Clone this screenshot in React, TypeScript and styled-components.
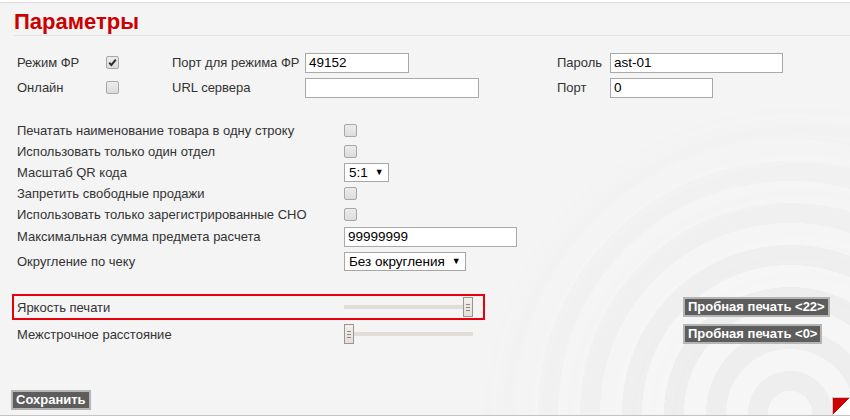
import React from 'react'
import styled, { createGlobalStyle } from 'styled-components'

const GlobalStyle = createGlobalStyle`
  html, body {
    margin: 0;
    padding: 0;
    background: #fff;
    font-family: "Liberation Sans", Arial, sans-serif;
  }
`

const Panel = styled.div`
  position: relative;
  margin-top: 2px;
  height: 412px;
  border-top: 1px solid #dcdcdc;
  border-bottom: 1px solid #c4c4c4;
  background: #f4f4f4;
  overflow: hidden;

  /* светлые дуги на фоне справа */
  &::before {
    content: '';
    position: absolute;
    inset: 0;
    background: repeating-radial-gradient(
      circle at 790px 410px,
      #f6f6f6 0 22px,
      #ececec 22px 42px
    );
    -webkit-mask-image: radial-gradient(circle at 800px 420px, rgba(0, 0, 0, 0.85) 120px, transparent 330px);
    mask-image: radial-gradient(circle at 800px 420px, rgba(0, 0, 0, 0.85) 120px, transparent 330px);
  }
`

const Content = styled.div`
  position: relative;
  z-index: 1;
  display: flex;
  flex-direction: column;
`

const Title = styled.h1`
  margin: 6px 0 0 14px;
  height: 26px;
  font-size: 22px;
  line-height: 26px;
  font-weight: bold;
  color: #cc0000;
  border-bottom: 1px solid #e2e2e2;
`

const TopGrid = styled.div`
  display: grid;
  grid-template-columns: 89px 66px 133px 252px 53px auto;
  grid-auto-rows: 25px;
  align-items: center;
  margin: 14px 0 0 17px;
`

const Label = styled.span`
  font-size: 13px;
  color: #333;
  white-space: nowrap;
`

const TextInput = styled.div<{ $w: number }>`
  box-sizing: border-box;
  width: ${p => p.$w}px;
  height: 20px;
  border: 1px solid #a9a9a9;
  background: #fff;
  padding: 0 3px;
  font-size: 13.5px;
  line-height: 18px;
  color: #000;
`

const Box = styled.span`
  box-sizing: border-box;
  display: inline-flex;
  align-items: center;
  justify-content: center;
  width: 13px;
  height: 13px;
  border: 1px solid #a7a7a7;
  border-radius: 2px;
  background: linear-gradient(#ececec, #dcdcdc);
`

const Check = ({ checked }: { checked?: boolean }) => (
  <Box>
    {checked && (
      <svg width="11" height="11" viewBox="0 0 11 11">
        <path d="M2.2 5.8 L4.4 8 L8.8 2.6" fill="none" stroke="#2f2f2f" strokeWidth="2" />
      </svg>
    )}
  </Box>
)

const List = styled.div`
  display: flex;
  flex-direction: column;
  margin: 20px 0 0 17px;
`

const Row = styled.div<{ $h: number }>`
  display: grid;
  grid-template-columns: 327px auto;
  align-items: center;
  height: ${p => p.$h}px;
`

const FakeSelect = styled.div`
  box-sizing: border-box;
  display: inline-flex;
  align-items: center;
  gap: 7px;
  height: 19px;
  padding: 0 4px;
  border: 1px solid #a6a6a6;
  background: #fff;
  font-size: 13.5px;
  color: #000;
  justify-self: start;
`

const Arrow = styled.span`
  font-size: 9px;
  line-height: 1;
`

const SliderRow = styled.div<{ $top?: number }>`
  display: flex;
  align-items: center;
  margin-top: ${p => p.$top ?? 0}px;
`

const Frame = styled.div<{ $active?: boolean }>`
  box-sizing: border-box;
  display: grid;
  grid-template-columns: 327px auto;
  align-items: center;
  width: 473px;
  height: ${p => (p.$active ? 26 : 28)}px;
  margin-left: 12px;
  padding-left: 3px;
  border: 2px solid ${p => (p.$active ? '#e8000b' : 'transparent')};
`

const Track = styled.div`
  position: relative;
  width: 129px;
  height: 20px;

  &::before {
    content: '';
    position: absolute;
    left: 0;
    right: 0;
    top: 8px;
    height: 4px;
    background: #e2ddd8;
  }
`

const Thumb = styled.div`
  position: absolute;
  top: 0;
  box-sizing: border-box;
  width: 10px;
  height: 20px;
  border: 1px solid #9b958f;
  background: linear-gradient(#f2efec, #e4dfda);
  display: flex;
  flex-direction: column;
  justify-content: center;
  align-items: center;
  gap: 2px;

  & > i {
    display: block;
    width: 4px;
    height: 1px;
    background: #8c8680;
  }
`

const Slider = ({ value, max }: { value: number; max: number }) => (
  <Track>
    <Thumb style={{ left: `${(value / max) * 119}px` }}>
      <i />
      <i />
      <i />
    </Thumb>
  </Track>
)

const DarkButton = styled.button`
  box-sizing: border-box;
  height: 20px;
  padding: 0 3px;
  border: 2px solid #b5b5b5;
  background: #5d5d5d;
  color: #fff;
  font-family: "Liberation Sans", Arial, sans-serif;
  font-size: 13px;
  font-weight: bold;
  line-height: 16px;
  cursor: pointer;
`

const TestButton = styled(DarkButton)`
  margin-left: 198px;
`

const SaveButton = styled(DarkButton)`
  align-self: flex-start;
  margin: 42px 0 0 11px;
`

const Grip = styled.div`
  position: absolute;
  right: 0;
  bottom: 0;
  z-index: 2;
  width: 18px;
  height: 18px;
  box-sizing: border-box;
  border: 1px solid #c8c8c8;
  border-right: none;
  border-bottom: none;
  background: linear-gradient(135deg, #cc0000 0 50%, #fff 50% 100%);
`

const listRows = [
  { label: 'Печатать наименование товара в одну строку', kind: 'check', h: 21 },
  { label: 'Использовать только один отдел', kind: 'check', h: 21 },
  { label: 'Масштаб QR кода', kind: 'select', value: '5:1', h: 21 },
  { label: 'Запретить свободные продажи', kind: 'check', h: 21 },
  { label: 'Использовать только зарегистрированные СНО', kind: 'check', h: 21 },
  { label: 'Максимальная сумма предмета расчета', kind: 'input', value: '99999999', h: 23 },
  { label: 'Округление по чеку', kind: 'select', value: 'Без округления', h: 27 },
]

const App = () => {
  return (
    <>
      <GlobalStyle />
      <Panel>
        <Content>
          <Title>Параметры</Title>

          <TopGrid>
            <Label>Режим ФР</Label>
            <Check checked />
            <Label>Порт для режима ФР</Label>
            <TextInput $w={104}>49152</TextInput>
            <Label>Пароль</Label>
            <TextInput $w={173}>ast-01</TextInput>

            <Label>Онлайн</Label>
            <Check />
            <Label>URL сервера</Label>
            <TextInput $w={174}></TextInput>
            <Label>Порт</Label>
            <TextInput $w={103}>0</TextInput>
          </TopGrid>

          <List>
            {listRows.map((row, i) => (
              <Row key={i} $h={row.h}>
                <Label>{row.label}</Label>
                {row.kind === 'check' && <Check />}
                {row.kind === 'select' && (
                  <FakeSelect>
                    {row.value}
                    <Arrow>▼</Arrow>
                  </FakeSelect>
                )}
                {row.kind === 'input' && <TextInput $w={173}>{row.value}</TextInput>}
              </Row>
            ))}
          </List>

          <SliderRow $top={19}>
            <Frame $active>
              <Label>Яркость печати</Label>
              <Slider value={22} max={22} />
            </Frame>
            <TestButton>Пробная печать &lt;22&gt;</TestButton>
          </SliderRow>
          <SliderRow>
            <Frame>
              <Label>Межстрочное расстояние</Label>
              <Slider value={0} max={22} />
            </Frame>
            <TestButton>Пробная печать &lt;0&gt;</TestButton>
          </SliderRow>

          <SaveButton>Сохранить</SaveButton>
        </Content>
        <Grip />
      </Panel>
    </>
  )
}

export default App
